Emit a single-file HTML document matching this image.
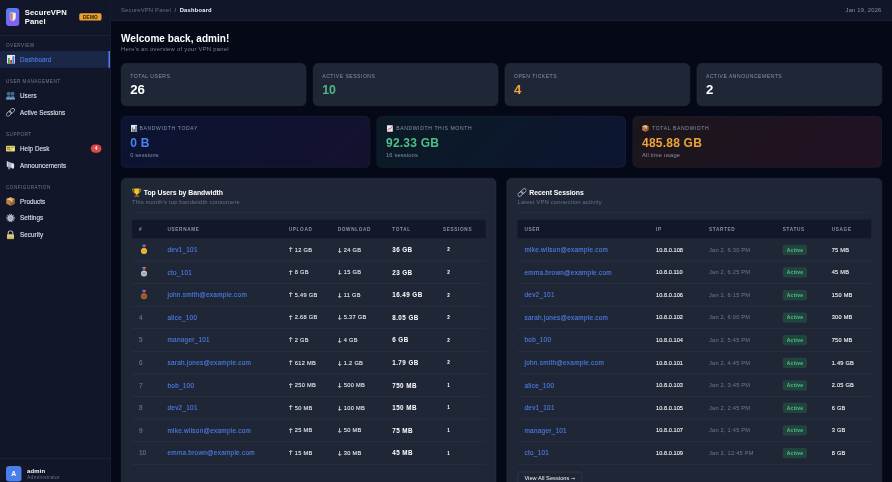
<!DOCTYPE html>
<html lang="en">
<head>
<meta charset="utf-8">
<title>SecureVPN Panel - Dashboard</title>
<style>
*{box-sizing:border-box;margin:0;padding:0}
html,body{width:892px;height:482px;overflow:hidden;background:#050817}
body{font-family:"Liberation Sans",sans-serif;color:#fff}
#app{position:absolute;left:0;top:0;width:3568px;height:1928px;transform:scale(.25) translateZ(0);transform-origin:0 0;overflow:hidden}
#app div,#app span,#app a{position:absolute;white-space:nowrap}
svg{position:absolute;display:block}
/* sidebar */
.sb{left:0;top:0;width:442px;height:1928px;background:rgba(17,22,40,.99);border-right:2px solid #262e43}
.sbh{left:0;top:0;width:440px;height:142px;border-bottom:2px solid #262e43}
.logo{left:24px;top:32px;width:53px;height:72px;border-radius:13px;background:linear-gradient(150deg,#4a86f5 0%,#6d6cf3 50%,#8b5cf6 100%)}
.lt{left:99px;font-size:30.5px;font-weight:700;line-height:38px;letter-spacing:.44px}
.demo{left:317px;top:53px;width:89px;height:29px;border-radius:6px;background:rgba(240,163,46,.99);color:#1a1a1a;font-size:19px;font-weight:700;text-align:center;line-height:30px;letter-spacing:.7px;padding-left:.7px}
.sl{left:24px;font-size:18.6px;line-height:24px;color:#727a8c;letter-spacing:1.87px}
.ni{left:0;width:440px;height:67px}
.ni.act{background:rgba(27,39,71,.99);border-right:6px solid #4f7ff0}
.ni .t{left:80px;top:0;line-height:67px;font-size:25.2px;letter-spacing:.19px;color:#e6e9ef;-webkit-text-stroke:.3px}
.ni.act .t{color:#4f80ee}
.ni svg{left:24px;top:15px}
.nb{left:363px;top:17px;width:43px;height:33px;border-radius:17px;background:rgba(224,74,74,.99);font-size:19.5px;font-weight:700;text-align:center;line-height:33px}
.sbf{left:0;top:1832px;width:440px;height:96px;border-top:2px solid #262e43}
.av{left:24px;top:30px;width:62px;height:62px;border-radius:13px;background:rgba(74,128,238,.99);font-size:27px;font-weight:700;text-align:center;line-height:62px}
.an{left:108px;top:34px;font-size:23.7px;letter-spacing:.8px;font-weight:700;line-height:28px}
.ar{left:108px;top:63px;font-size:20.3px;letter-spacing:.96px;line-height:24px;color:#6b7385}
/* topbar */
.tb{left:442px;top:0;width:3126px;height:83px;background:rgba(17,22,40,.99);border-bottom:2px solid #262e43}
.bc{left:42px;top:0;line-height:80px;font-size:23.2px;letter-spacing:.86px;color:#6b7385}
.bc b{color:#f3f4f6;font-weight:700}
.bc i{font-style:normal;color:#8a92a6;padding:0 13.5px 0 14px}
.dt{right:42px;top:0;line-height:80px;font-size:23.2px;letter-spacing:.81px;color:#8a92a6}
/* heading */
.h1{left:484px;top:127.5px;font-size:40px;font-weight:700;line-height:50px;letter-spacing:.13px}
.sub{left:484px;top:181px;font-size:23.5px;letter-spacing:.96px;line-height:28px;color:#7a8296}
/* stat cards */
.sc{top:253px;width:741px;height:171px;border-radius:20px;background:rgba(31,39,56,.99);border:2px solid #29334a}
.sc .l{left:35px;top:35px;font-size:20.3px;line-height:26px;color:#8a92a6;letter-spacing:2px}
.sc .v{left:35px;top:75.5px;font-size:48px;font-weight:700;line-height:60px;transform:scaleX(1.1);transform-origin:0 0}
/* bw cards */
.bw{top:465px;width:996px;height:205px;border-radius:20px;border:2px solid #252e4a}
.bw .l{left:72px;top:33.5px;font-size:20.3px;line-height:26px;color:#8a92a6;letter-spacing:2.5px}
.bw .v{left:35px;top:74px;font-size:48px;font-weight:700;line-height:60px;letter-spacing:.9px}
.bw .s{left:35px;top:141px;font-size:23px;letter-spacing:.56px;line-height:26px;color:#8a92a6}
.bw svg{left:37.5px;top:32px}
/* panels */
.pn{top:712px;width:1501px;height:1300px;border-radius:20px;background:rgba(31,39,56,.99);border:2px solid #29334a}
.pn .pt{left:89px;top:41px;font-size:27.5px;letter-spacing:-.15px;font-weight:700;line-height:34px}
.pn .ps{left:42px;top:77.5px;font-size:23.5px;letter-spacing:.66px;line-height:28px;color:#66718a}
.pn .hr{left:42px;top:136px;width:1415px;height:2px;background:rgba(44,53,71,.99)}
.th{left:42px;top:165px;width:1415px;height:74px;background:rgba(18,24,41,.99)}
.th span{top:0;line-height:75px;font-size:18.8px;font-weight:700;color:#8a92a6;letter-spacing:2.59px}
.tr{left:42px;width:1415px;height:90.3px;border-bottom:2px solid #2c3547}
.c{top:0;line-height:88px}
.rk{left:28px;top:0;line-height:88px;font-size:26px;color:#6f798d;-webkit-text-stroke:.3px}
.tr i{position:absolute;left:-2.5px;top:0;font-style:normal;font-family:"Noto Sans CJK SC","Liberation Sans",sans-serif;font-size:20.5px;letter-spacing:0;-webkit-text-stroke:.5px #e6e9ef;transform:scaleX(1.35)}
.dn i{top:-2px}
.medal{left:34px;top:23px}
.un,.ru{color:#4f80ee;font-size:25.6px;letter-spacing:1.05px;-webkit-text-stroke:.3px #4f80ee}
.un{left:142px}.ru{left:28px}
.up,.dn{font-size:22.5px;letter-spacing:1.28px;color:#e6e9ef;padding-left:24px;-webkit-text-stroke:.4px #e6e9ef}
.up{left:627px}.dn{left:823px}
.tot{left:1041px;font-size:25.2px;letter-spacing:1.7px;font-weight:700}
.ses{left:1261px;font-size:18.5px;font-weight:700}
.ip{left:554px;font-size:22.5px;letter-spacing:.18px;color:#f3f4f6;-webkit-text-stroke:.4px #f3f4f6}
.st{left:766px;font-size:22.5px;letter-spacing:.97px;color:#6f7a92}
.us{left:1257px;font-size:22.5px;letter-spacing:.94px;color:#f3f4f6;-webkit-text-stroke:.4px #f3f4f6}
#app .bd{left:1061px;top:24px;width:97px;height:41px;line-height:41px;border-radius:8px;background:rgba(34,68,63,.99);color:#4ccb86;font-size:19.5px;letter-spacing:1.29px;padding-left:1.29px;font-weight:700;text-align:center}
.btn{left:42px;top:1173px;width:258px;height:60px;border-radius:11px;border:2px solid #384154;font-size:22.5px;letter-spacing:.24px;line-height:46px;text-align:center;color:#f3f4f6}
.btn i{font-style:normal;font-family:"DejaVu Sans",sans-serif;font-size:19px}
</style>
</head>
<body>
<div id="app">

<!-- SIDEBAR -->
<div class="sb">
  <div class="sbh">
    <div class="logo"><svg viewBox="0 0 26 38" width="26" height="38" style="left:14px;top:16px"><path d="M13 0C9 2.5 4 3 0 3v17c0 9 6 14 13 18 7-4 13-9 13-18V3C22 3 17 2.5 13 0z" fill="#c9ccd6"/><path d="M13 3C10 5 6 5.5 3 5.5V20c0 7 4.5 11 10 14.5z" fill="#e2704c"/><path d="M13 3c3 2 7 2.5 10 2.5V20c0 7-4.5 11-10 14.5z" fill="#f2f3f7"/></svg></div>
    <div class="lt" style="top:30px">SecureVPN</div>
    <div class="lt" style="top:65px">Panel</div>
    <div class="demo">DEMO</div>
  </div>

  <div class="sl" style="top:168px">OVERVIEW</div>
  <div class="ni act" style="top:204px"><svg viewBox="0 0 32 36" width="32" height="36" style="left:28px"><rect x="0" y="0" width="32" height="36" rx="2" fill="#e6e8ee"/><rect x="4" y="13" width="7" height="23" fill="#3fa84f"/><rect x="13" y="21" width="7" height="15" fill="#c8352c"/><rect x="22" y="6" width="7" height="30" fill="#3f6fd0"/></svg><span class="t">Dashboard</span></div>

  <div class="sl" style="top:313px">USER MANAGEMENT</div>
  <div class="ni" style="top:350px"><svg viewBox="0 0 36 36" width="36" height="36"><defs><linearGradient id="ug" x1="0" y1="0" x2="0" y2="1"><stop offset="0" stop-color="#3f6a93"/><stop offset="1" stop-color="#86b0d6"/></linearGradient></defs><circle cx="10.5" cy="10" r="8" fill="#41698f"/><circle cx="26" cy="10" r="8" fill="#41698f"/><path d="M0 33c0-10 4-14 10.5-14S20 23 20 33z" fill="url(#ug)"/><path d="M17 33c0-10 3-14 9-14s10 4 10 14z" fill="url(#ug)"/></svg><span class="t">Users</span></div>
  <div class="ni" style="top:416px"><svg viewBox="2.5 2.5 31 31" width="36" height="36" fill="none" stroke="#c0c2c8" stroke-width="2.8"><g transform="rotate(-42 18 18)"><rect x="0.5" y="12" width="20" height="12" rx="6"/><rect x="15.5" y="12" width="20" height="12" rx="6"/></g></svg><span class="t">Active Sessions</span></div>

  <div class="sl" style="top:524px">SUPPORT</div>
  <div class="ni" style="top:561px"><svg viewBox="0 0 36 36" width="36" height="36"><rect x="0" y="7" width="36" height="23" rx="3" fill="#ddd169"/><rect x="4" y="12" width="12" height="6" fill="#8d8647"/><rect x="4" y="21" width="17" height="4" fill="#a59d50"/><rect x="20" y="12" width="12" height="3" fill="#a59d50"/><rect x="24" y="18" width="8" height="8" fill="#f2ea9a"/></svg><span class="t">Help Desk</span><div class="nb">4</div></div>
  <div class="ni" style="top:628px"><svg viewBox="0 0 36 36" width="36" height="36"><path d="M4 2l27 9v20L4 24z" fill="#aeb2bb"/><ellipse cx="27" cy="21" rx="6" ry="11" fill="#e4e6ea"/><path d="M3 2l5 1.5v21L3 23z" fill="#d3d5db"/><rect x="9" y="24" width="8" height="11" rx="2" fill="#8e939e"/></svg><span class="t">Announcements</span></div>

  <div class="sl" style="top:736px">CONFIGURATION</div>
  <div class="ni" style="top:773px"><svg viewBox="0 0 36 36" width="36" height="36"><path d="M18 1l17 7v19l-17 8L1 27V8z" fill="#b77e46"/><path d="M18 15l17-7v19l-17 8z" fill="#8f5d2f"/><path d="M18 1l17 7-17 7L1 8z" fill="#d8a468"/><path d="M9 4.5l17 7v8l-5 2v-8L4 6.5z" fill="#ecd4a6"/></svg><span class="t">Products</span></div>
  <div class="ni" style="top:839px"><svg viewBox="0 0 36 36" width="36" height="36"><circle cx="18" cy="18" r="14.5" fill="none" stroke="#a9adb6" stroke-width="5" stroke-dasharray="4.200 3.400"/><circle cx="18" cy="18" r="12.5" fill="#b4b8c1"/><circle cx="18" cy="18" r="7" fill="#8b909b" stroke="#d4d7dd" stroke-width="2"/><circle cx="18" cy="18" r="2.5" fill="#c9ccd3"/></svg><span class="t">Settings</span></div>
  <div class="ni" style="top:906px"><svg viewBox="0 0 36 36" width="36" height="36"><path d="M9 17V11a9 9 0 0 1 18 0v6" fill="none" stroke="#a9adb6" stroke-width="4.5"/><rect x="4" y="16" width="28" height="20" rx="3" fill="#d9cf7c"/><rect x="4" y="28" width="28" height="8" rx="3" fill="#c2b85f"/></svg><span class="t">Security</span></div>

  <div class="sbf">
    <div class="av">A</div>
    <div class="an">admin</div>
    <div class="ar">Administrator</div>
  </div>
</div>

<!-- TOPBAR -->
<div class="tb">
  <div class="bc">SecureVPN Panel<i>/</i><b>Dashboard</b></div>
  <div class="dt">Jan 19, 2026</div>
</div>

<div class="h1">Welcome back, admin!</div>
<div class="sub">Here's an overview of your VPN panel</div>

<!-- STAT CARDS -->
<div class="sc" style="left:484px"><span class="l">TOTAL USERS</span><span class="v">26</span></div>
<div class="sc" style="left:1252px"><span class="l">ACTIVE SESSIONS</span><span class="v" style="color:#4fb783;transform:scaleX(1.03)">10</span></div>
<div class="sc" style="left:2019px"><span class="l">OPEN TICKETS</span><span class="v" style="color:#f0a339">4</span></div>
<div class="sc" style="left:2787px"><span class="l">ACTIVE ANNOUNCEMENTS</span><span class="v">2</span></div>

<!-- BANDWIDTH CARDS -->
<div class="bw" style="left:484px;background:linear-gradient(135deg,rgba(11,20,49,.99) 0%,rgba(20,17,47,.99) 100%)"><svg viewBox="0 0 32 36" width="25" height="29" preserveAspectRatio="none"><rect x="0" y="0" width="32" height="36" rx="2" fill="#e6e8ee"/><rect x="4" y="13" width="7" height="23" fill="#3fa84f"/><rect x="13" y="21" width="7" height="15" fill="#c8352c"/><rect x="22" y="6" width="7" height="30" fill="#3f6fd0"/></svg><span class="l">BANDWIDTH TODAY</span><span class="v" style="color:#4f80ee">0 B</span><span class="s">0 sessions</span></div>
<div class="bw" style="left:1507px;background:linear-gradient(135deg,rgba(11,27,37,.99) 0%,rgba(13,21,50,.99) 100%)"><svg viewBox="0 0 36 36" width="25" height="29" preserveAspectRatio="none"><rect x="1" y="2" width="34" height="33" rx="3" fill="#e9ebf0"/><path d="M5 29l9-11 6 5 11-15" fill="none" stroke="#d8453e" stroke-width="4"/></svg><span class="l" style="left:75.5px">BANDWIDTH THIS MONTH</span><span class="v" style="color:#4fbf86">92.33 GB</span><span class="s">16 sessions</span></div>
<div class="bw" style="left:2531px;background:linear-gradient(135deg,rgba(28,23,28,.99) 0%,rgba(34,18,36,.99) 100%)"><svg viewBox="0 0 36 36" width="27" height="29" preserveAspectRatio="none" style="left:34.5px"><path d="M18 1l17 7v19l-17 8L1 27V8z" fill="#b77e46"/><path d="M18 15l17-7v19l-17 8z" fill="#8f5d2f"/><path d="M18 1l17 7-17 7L1 8z" fill="#d8a468"/><path d="M9 4.5l17 7v8l-5 2v-8L4 6.5z" fill="#ecd4a6"/></svg><span class="l" style="left:75.5px">TOTAL BANDWIDTH</span><span class="v" style="color:#f0a339">485.88 GB</span><span class="s">All time usage</span></div>

<!-- TOP USERS -->
<div class="pn" style="left:484px">
  <svg viewBox="0 0 38 38" width="38" height="38" style="left:42px;top:38px"><path d="M9 2h20v12c0 7-4 11-10 11S9 21 9 14z" fill="#f2c231"/><path d="M9 5H2c0 8 3 12 9 13M29 5h7c0 8-3 12-9 13" fill="none" stroke="#e0a51e" stroke-width="3.5"/><rect x="16" y="24" width="6" height="6" fill="#d99a1a"/><rect x="10" y="29" width="18" height="7" rx="1.5" fill="#8a5a2a"/></svg>
  <div class="pt">Top Users by Bandwidth</div>
  <div class="ps">This month's top bandwidth consumers</div>
  <div class="hr"></div>
  <div class="th"><span style="left:28px">#</span><span style="left:142px">USERNAME</span><span style="left:627px">UPLOAD</span><span style="left:823px">DOWNLOAD</span><span style="left:1041px">TOTAL</span><span style="left:1244px">SESSIONS</span></div>
  <div id="t1" style="left:0;top:241px;width:1501px;height:1000px">
<div class="tr" style="top:0.0px"><svg class="medal" viewBox="0 0 28 40" width="28" height="40"><path d="M5 0h7l4 11h-6z" fill="#4a6fd0"/><path d="M23 0h-7l-4 11h6z" fill="#d9534f"/><path d="M12 0h4l-2 5z" fill="#e8e8ee"/><circle cx="14" cy="26" r="12" fill="#f6c73a"/><circle cx="14" cy="26" r="7.5" fill="#e9a91c"/></svg><span class="c un">dev1_101</span><span class="c up"><i>↑</i>12 GB</span><span class="c dn"><i>↓</i>24 GB</span><span class="c tot">36 GB</span><span class="c ses">2</span></div>
<div class="tr" style="top:90.3px"><svg class="medal" viewBox="0 0 28 40" width="28" height="40"><path d="M5 0h7l4 11h-6z" fill="#4a6fd0"/><path d="M23 0h-7l-4 11h6z" fill="#d9534f"/><path d="M12 0h4l-2 5z" fill="#e8e8ee"/><circle cx="14" cy="26" r="12" fill="#c9ccd1"/><circle cx="14" cy="26" r="7.5" fill="#a3a7ae"/></svg><span class="c un">cto_101</span><span class="c up"><i>↑</i>8 GB</span><span class="c dn"><i>↓</i>15 GB</span><span class="c tot">23 GB</span><span class="c ses">2</span></div>
<div class="tr" style="top:180.6px"><svg class="medal" viewBox="0 0 28 40" width="28" height="40"><path d="M5 0h7l4 11h-6z" fill="#4a6fd0"/><path d="M23 0h-7l-4 11h6z" fill="#d9534f"/><path d="M12 0h4l-2 5z" fill="#e8e8ee"/><circle cx="14" cy="26" r="12" fill="#b9692a"/><circle cx="14" cy="26" r="7.5" fill="#9a5216"/></svg><span class="c un">john.smith@example.com</span><span class="c up"><i>↑</i>5.49 GB</span><span class="c dn"><i>↓</i>11 GB</span><span class="c tot">16.49 GB</span><span class="c ses">2</span></div>
<div class="tr" style="top:270.9px"><span class="rk">4</span><span class="c un">alice_100</span><span class="c up"><i>↑</i>2.68 GB</span><span class="c dn"><i>↓</i>5.37 GB</span><span class="c tot">8.05 GB</span><span class="c ses">2</span></div>
<div class="tr" style="top:361.2px"><span class="rk">5</span><span class="c un">manager_101</span><span class="c up"><i>↑</i>2 GB</span><span class="c dn"><i>↓</i>4 GB</span><span class="c tot">6 GB</span><span class="c ses">2</span></div>
<div class="tr" style="top:451.5px"><span class="rk">6</span><span class="c un">sarah.jones@example.com</span><span class="c up"><i>↑</i>612 MB</span><span class="c dn"><i>↓</i>1.2 GB</span><span class="c tot">1.79 GB</span><span class="c ses">2</span></div>
<div class="tr" style="top:541.8px"><span class="rk">7</span><span class="c un">bob_100</span><span class="c up"><i>↑</i>250 MB</span><span class="c dn"><i>↓</i>500 MB</span><span class="c tot">750 MB</span><span class="c ses">1</span></div>
<div class="tr" style="top:632.1px"><span class="rk">8</span><span class="c un">dev2_101</span><span class="c up"><i>↑</i>50 MB</span><span class="c dn"><i>↓</i>100 MB</span><span class="c tot">150 MB</span><span class="c ses">1</span></div>
<div class="tr" style="top:722.4px"><span class="rk">9</span><span class="c un">mike.wilson@example.com</span><span class="c up"><i>↑</i>25 MB</span><span class="c dn"><i>↓</i>50 MB</span><span class="c tot">75 MB</span><span class="c ses">1</span></div>
<div class="tr" style="top:812.7px"><span class="rk">10</span><span class="c un">emma.brown@example.com</span><span class="c up"><i>↑</i>15 MB</span><span class="c dn"><i>↓</i>30 MB</span><span class="c tot">45 MB</span><span class="c ses">1</span></div>
  </div>
</div>

<!-- RECENT SESSIONS -->
<div class="pn" style="left:2026px;width:1502px">
  <svg viewBox="2.5 2.5 31 31" width="36" height="36" style="left:42px;top:38px" fill="none" stroke="#c0c2c8" stroke-width="2.8"><g transform="rotate(-42 18 18)"><rect x="0.5" y="12" width="20" height="12" rx="6"/><rect x="15.5" y="12" width="20" height="12" rx="6"/></g></svg>
  <div class="pt">Recent Sessions</div>
  <div class="ps">Latest VPN connection activity</div>
  <div class="hr"></div>
  <div class="th"><span style="left:28px">USER</span><span style="left:554px">IP</span><span style="left:766px">STARTED</span><span style="left:1061px">STATUS</span><span style="left:1257px">USAGE</span></div>
  <div id="t2" style="left:0;top:241px;width:1501px;height:1000px">
<div class="tr" style="top:0.0px"><span class="c ru">mike.wilson@example.com</span><span class="c ip">10.8.0.108</span><span class="c st">Jan 2, 6:30 PM</span><span class="c bd">Active</span><span class="c us">75 MB</span></div>
<div class="tr" style="top:90.3px"><span class="c ru">emma.brown@example.com</span><span class="c ip">10.8.0.110</span><span class="c st">Jan 2, 6:25 PM</span><span class="c bd">Active</span><span class="c us">45 MB</span></div>
<div class="tr" style="top:180.6px"><span class="c ru">dev2_101</span><span class="c ip">10.8.0.106</span><span class="c st">Jan 2, 6:15 PM</span><span class="c bd">Active</span><span class="c us">150 MB</span></div>
<div class="tr" style="top:270.9px"><span class="c ru">sarah.jones@example.com</span><span class="c ip">10.8.0.102</span><span class="c st">Jan 2, 6:00 PM</span><span class="c bd">Active</span><span class="c us">300 MB</span></div>
<div class="tr" style="top:361.2px"><span class="c ru">bob_100</span><span class="c ip">10.8.0.104</span><span class="c st">Jan 2, 5:45 PM</span><span class="c bd">Active</span><span class="c us">750 MB</span></div>
<div class="tr" style="top:451.5px"><span class="c ru">john.smith@example.com</span><span class="c ip">10.8.0.101</span><span class="c st">Jan 2, 4:45 PM</span><span class="c bd">Active</span><span class="c us">1.49 GB</span></div>
<div class="tr" style="top:541.8px"><span class="c ru">alice_100</span><span class="c ip">10.8.0.103</span><span class="c st">Jan 2, 3:45 PM</span><span class="c bd">Active</span><span class="c us">2.05 GB</span></div>
<div class="tr" style="top:632.1px"><span class="c ru">dev1_101</span><span class="c ip">10.8.0.105</span><span class="c st">Jan 2, 2:45 PM</span><span class="c bd">Active</span><span class="c us">6 GB</span></div>
<div class="tr" style="top:722.4px"><span class="c ru">manager_101</span><span class="c ip">10.8.0.107</span><span class="c st">Jan 2, 1:45 PM</span><span class="c bd">Active</span><span class="c us">3 GB</span></div>
<div class="tr" style="top:812.7px"><span class="c ru">cto_101</span><span class="c ip">10.8.0.109</span><span class="c st">Jan 2, 12:45 PM</span><span class="c bd">Active</span><span class="c us">8 GB</span></div>
  </div>
  <div class="btn">View All Sessions <i>→</i></div>
</div>

</div>
</body>
</html>
